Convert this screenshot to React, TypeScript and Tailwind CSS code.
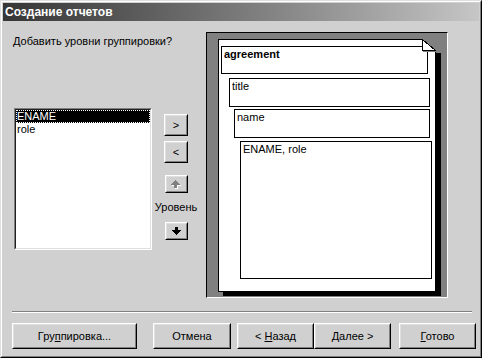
import type { ReactNode } from 'react';

const font = { fontFamily: '"Liberation Sans", Arial, sans-serif' };

function Raised({ className, children }: { className?: string; children?: ReactNode }) {
  return (
    <div className={`border border-t-white border-l-white border-r-black border-b-black ${className ?? ''}`}>
      <div className="flex h-full w-full items-center justify-center border border-t-[#dfdfdf] border-l-[#dfdfdf] border-r-[#808080] border-b-[#808080]">
        {children}
      </div>
    </div>
  );
}

// chunky 9x8 block arrow pointing up
const arrowPath = 'M4 0h1v1h1v1h1v1h1v1h1v1h-3v3h-3v-3h-3v-1h1v-1h1v-1h1v-1h1z';

function UpArrow({ disabled }: { disabled?: boolean }) {
  return (
    <svg width="10" height="9" viewBox="0 0 10 9" shapeRendering="crispEdges">
      {disabled && <path d={arrowPath} transform="translate(1 1)" fill="#ffffff" />}
      <path d={arrowPath} fill={disabled ? '#808080' : '#000'} />
    </svg>
  );
}

function DownArrow() {
  return (
    <svg width="9" height="8" viewBox="0 0 9 8" shapeRendering="crispEdges">
      <path d={arrowPath} transform="translate(0 8) scale(1 -1)" fill="#000" />
    </svg>
  );
}

function ReportBox({ className, children }: { className: string; children: ReactNode }) {
  return (
    <div className={`border border-black bg-white pl-[2px] pt-[1px] leading-[13px] ${className}`}>{children}</div>
  );
}

export default function App() {
  return (
    <div
      className="h-[358px] w-[482px] border border-t-[#dfdfdf] border-l-[#dfdfdf] border-r-black border-b-black text-[11px] text-black"
      style={font}
    >
      <div className="flex h-full w-full flex-col border border-t-white border-l-white border-r-[#808080] border-b-[#808080] bg-[#d0d0d0] p-[1px]">
        {/* Title bar */}
        <div className="flex h-[18px] items-center bg-gradient-to-r from-[#363636] to-[#c6c6c6] pl-[2px] text-[12px] font-bold text-white">
          Создание отчетов
        </div>

        {/* Body */}
        <div className="flex pl-[10px] pt-[11px]">
          <div className="flex w-[193px] flex-col">
            <p className="mt-[3px] leading-[13px]">Добавить уровни группировки?</p>

            <div className="mt-[60px] flex">
              {/* List of fields */}
              <div className="ml-[1px] h-[142px] w-[138px] border border-t-[#808080] border-l-[#808080] border-r-white border-b-white">
                <div className="h-full w-full border border-t-[#202020] border-l-[#202020] border-r-[#dfdfdf] border-b-[#dfdfdf] bg-white">
                  <div className="bg-black pl-[1px] leading-[13px] text-white outline-1 -outline-offset-1 outline-dotted outline-white">
                    ENAME
                  </div>
                  <div className="pl-[1px] leading-[13px]">role</div>
                </div>
              </div>

              {/* Move buttons */}
              <div className="ml-[12px] mt-[6px] flex w-[24px] flex-col items-center">
                <Raised className="h-[22px] w-[24px]">&gt;</Raised>
                <Raised className="mt-[5px] h-[22px] w-[24px]">&lt;</Raised>
                <Raised className="mt-[12px] h-[18px] w-[23px]">
                  <UpArrow disabled />
                </Raised>
                <span className="mt-[8px] whitespace-nowrap leading-[13px]">Уровень</span>
                <Raised className="mt-[8px] h-[18px] w-[23px]">
                  <DownArrow />
                </Raised>
              </div>
            </div>
          </div>

          {/* Preview */}
          <div className="h-[266px] w-[242px] border border-t-black border-l-black border-r-white border-b-white bg-[#808080] pl-[11px] pt-[6px]">
            <div className="relative h-[253px] w-[218px] border border-black bg-white pl-[2px] pt-[6px] shadow-[5px_4px_0_0_#000]">
              <ReportBox className="h-[28px] w-[207px] font-bold">agreement</ReportBox>
              <ReportBox className="ml-[8px] mt-[4px] h-[29px] w-[201px]">title</ReportBox>
              <ReportBox className="ml-[13px] mt-[2px] h-[29px] w-[196px]">name</ReportBox>
              <ReportBox className="ml-[19px] mt-[3px] h-[138px] w-[192px]">ENAME, role</ReportBox>

              <svg
                className="absolute right-[-7px] top-[-1px]"
                width="20"
                height="14"
                viewBox="0 0 20 14"
                shapeRendering="crispEdges"
              >
                <polygon points="0,0 20,0 20,14 14,14 14,13 0,0" fill="#808080" />
                <polygon points="0.5,0.5 0.5,11.5 13.5,11.5" fill="#ffffff" stroke="#000" strokeWidth="1" />
                <line x1="1" y1="12.5" x2="14" y2="12.5" stroke="#808080" />
              </svg>
            </div>
          </div>
        </div>

        {/* Separator */}
        <div className="ml-[9px] mt-[13px] h-[2px] w-[460px] border-t border-b border-t-[#808080] border-b-white" />

        {/* Footer buttons */}
        <div className="ml-[9px] mt-[10px] flex">
          <Raised className="h-[26px] w-[125px]">
            <span>
              Гру<span className="underline">п</span>пировка...
            </span>
          </Raised>
          <Raised className="ml-[16px] h-[26px] w-[78px]">Отмена</Raised>
          <Raised className="ml-[6px] h-[26px] w-[77px]">
            <span>
              &lt; <span className="underline">Н</span>азад
            </span>
          </Raised>
          <Raised className="h-[26px] w-[77px]">
            <span>
              <span className="underline">Д</span>алее &gt;
            </span>
          </Raised>
          <Raised className="ml-[8px] h-[26px] w-[77px]">
            <span>
              <span className="underline">Г</span>отово
            </span>
          </Raised>
        </div>
      </div>
    </div>
  );
}
